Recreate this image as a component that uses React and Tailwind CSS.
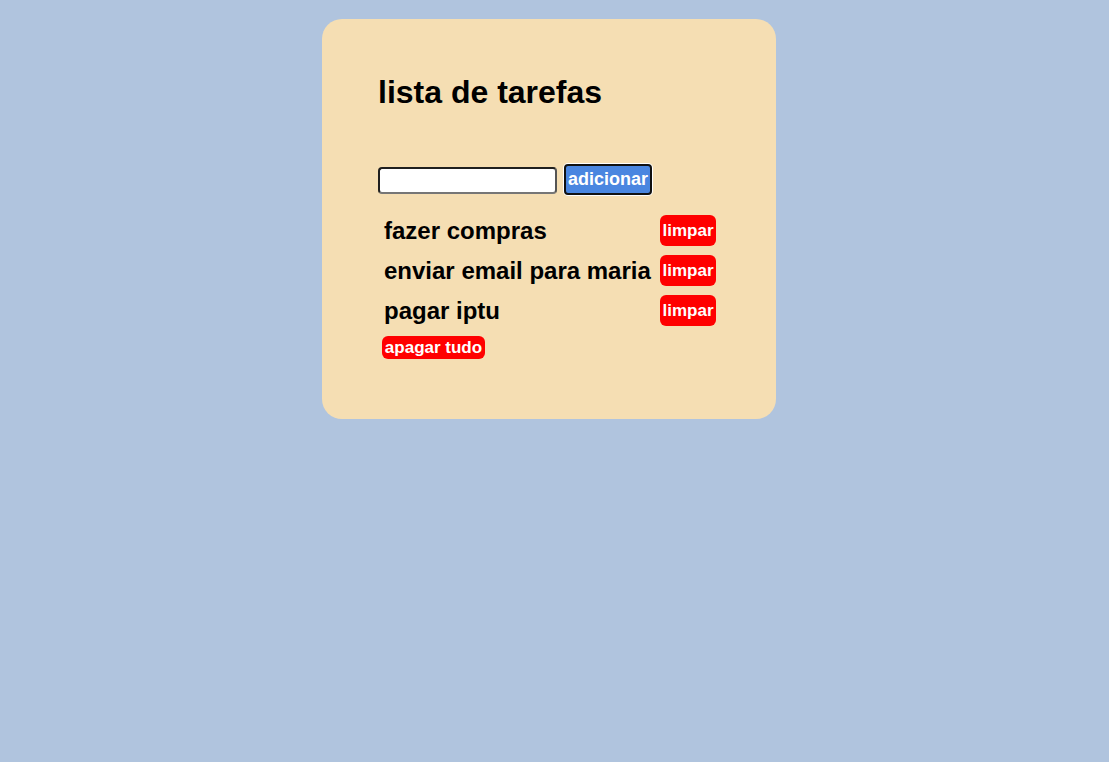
import React, { useState } from 'react';

const initialTasks = ['fazer compras', 'enviar email para maria', 'pagar iptu'];

export default function App() {
  const [tasks, setTasks] = useState(initialTasks);
  const [text, setText] = useState('');

  const add = () => {
    if (!text.trim()) return;
    setTasks([...tasks, text.trim()]);
    setText('');
  };

  return (
    <div className="min-h-[762px] bg-[#b0c4de] pt-[19px] font-['Liberation_Sans',Arial,sans-serif] text-black">
      <div className="ml-[322px] w-[454px] h-[400px] rounded-[20px] bg-[#f5deb3] pl-[56px] pt-[55px]">
        <h1 className="text-[32px] font-bold leading-[37px]">lista de tarefas</h1>

        <div className="mt-[53px] flex items-start gap-[7px]">
          <input
            value={text}
            onChange={(e) => setText(e.target.value)}
            className="mt-[3px] w-[179px] h-[27px] rounded-[4px] border-2 border-[#1f1f1f] border-b-[#767676] border-r-[#555] bg-white px-1 text-[14px] outline-none"
          />
          <button
            onClick={add}
            className="h-[31px] w-[88px] rounded-[4px] border-2 border-[#111] bg-[#4a86e0] text-[18px] font-bold leading-[21px] text-white ring-1 ring-white"
          >
            adicionar
          </button>
        </div>

        <ul className="mt-[20px] flex w-[338px] flex-col gap-[9px]">
          {tasks.map((t, i) => (
            <li key={i} className="flex items-center justify-between">
              <span className="pl-[6px] text-[24px] font-bold leading-[28px]">{t}</span>
              <button
                onClick={() => setTasks(tasks.filter((_, j) => j !== i))}
                className="h-[31px] w-[56px] rounded-[6px] bg-[#ff0000] text-[17px] font-bold leading-[19px] text-white"
              >
                limpar
              </button>
            </li>
          ))}
        </ul>

        <button
          onClick={() => setTasks([])}
          className="ml-[4px] mt-[10px] h-[23px] w-[103px] rounded-[6px] bg-[#ff0000] text-[17px] font-bold leading-[19px] text-white"
        >
          apagar tudo
        </button>
      </div>
    </div>
  );
}
